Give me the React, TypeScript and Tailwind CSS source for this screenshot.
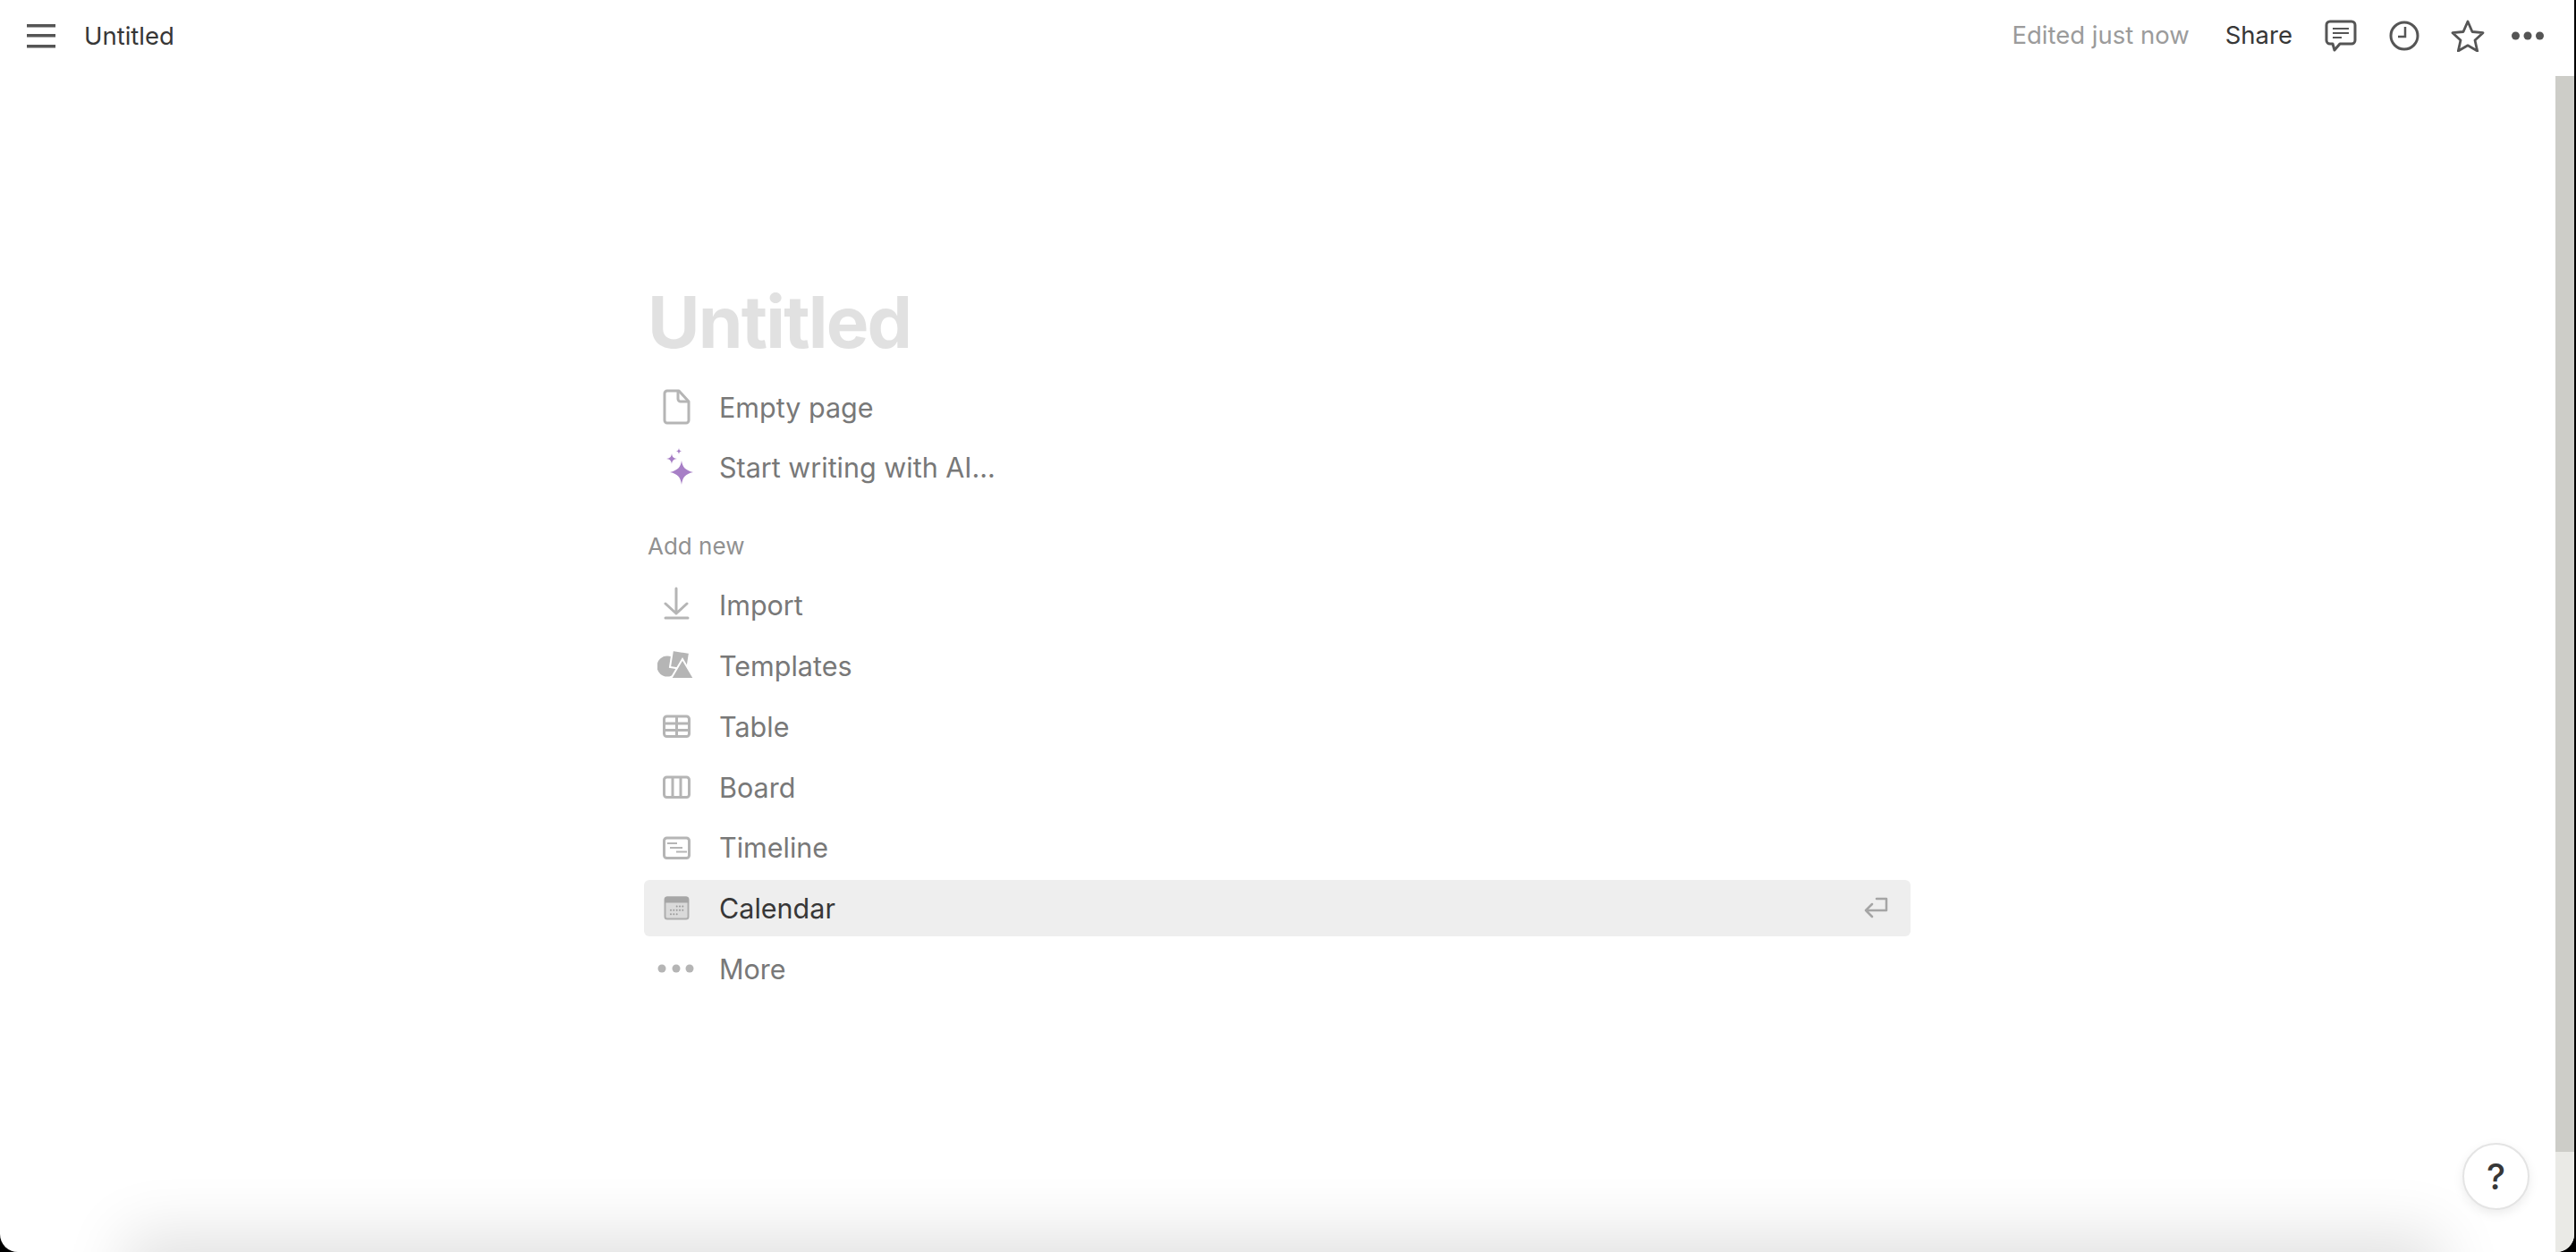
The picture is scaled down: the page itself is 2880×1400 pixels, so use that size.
const Doc = () => (
  <svg width="40" height="44" viewBox="0 0 40 44" fill="none" stroke="#b5b5b5" strokeWidth="3" strokeLinejoin="round">
    <path d="M10 4h13l11 12v21a3 3 0 0 1-3 3H10a3 3 0 0 1-3-3V7a3 3 0 0 1 3-3z" />
    <path d="M22 4v9a3 3 0 0 0 3 3h9" />
  </svg>
);

const Sparkle = () => (
  <svg width="40" height="44" viewBox="0 0 40 44" fill="#a77fc6">
    <path d="M26 14c1 7 4 11 13 13-9 2-12 6-13 14-1-8-4-12-13-14 9-2 12-6 13-13z" />
    <path d="M15 6c.5 4 2 5.500 6 6-4 .5-5.500 2-6 6-.5-4-2-5.500-6-6 4-.5 5.500-2 6-6z" />
    <path d="M23 0c.3 2.500 1 3.200 3.500 3.500C24 3.800 23.300 4.500 23 7c-.3-2.500-1-3.200-3.500-3.500C22 3.200 22.700 2.500 23 0z" />
  </svg>
);

const Import = () => (
  <svg width="40" height="40" viewBox="0 0 40 40" fill="none" stroke="#b5b5b5" strokeWidth="3" strokeLinecap="round" strokeLinejoin="round">
    <path d="M20 2v28M8 19l12 11 12-11M8 35h25" />
  </svg>
);

const Templates = () => (
  <svg width="42" height="40" viewBox="0 0 42 40" fill="#b5b5b5" stroke="#fff" strokeWidth="2">
    <circle cx="11" cy="21" r="11.500" stroke="none" />
    <path d="M17 3l19 3-3 19-19-3z" />
    <path d="M28 13l13 22H15z" />
  </svg>
);

const Table = () => (
  <svg width="40" height="40" viewBox="0 0 40 40" fill="none" stroke="#b5b5b5" strokeWidth="3">
    <rect x="6.500" y="9" width="28" height="22.500" rx="3" />
    <path d="M6 17h29M6 24.500h29M20.500 9v22" />
  </svg>
);

const Board = () => (
  <svg width="40" height="40" viewBox="0 0 40 40" fill="none" stroke="#b5b5b5" strokeWidth="3">
    <rect x="6.500" y="9" width="28" height="22.500" rx="3" />
    <path d="M16 9v22M25 9v22" />
  </svg>
);

const Timeline = () => (
  <svg width="40" height="40" viewBox="0 0 40 40" fill="none" stroke="#b5b5b5" strokeWidth="3">
    <rect x="6.500" y="9" width="28" height="22.500" rx="3" />
    <path d="M10 15h11M13 20h14M20 24.500h12" strokeWidth="2" />
  </svg>
);

const calendarDots = [
  [20.700, 18.500], [24, 18.500], [27.300, 18.500],
  [14, 22.800], [17.300, 22.800], [20.700, 22.800], [24, 22.800], [27.300, 22.800],
  [14, 27.200], [17.300, 27.200], [20.700, 27.200],
];

const CalendarIcon = () => (
  <svg width="40" height="40" viewBox="0 0 40 40">
    <rect x="7.500" y="8.500" width="26" height="24" rx="2.500" fill="#dadada" stroke="#adadad" strokeWidth="2" />
    <path d="M7 10.500a3 3 0 0 1 3-3h21a3 3 0 0 1 3 3v4H7z" fill="#a6a6a6" />
    <g fill="#9c9c9c">
      {calendarDots.map(([x, y]) => (
        <circle key={`${x}-${y}`} cx={x} cy={y} r="1" />
      ))}
    </g>
  </svg>
);

const More = () => (
  <svg width="44" height="40" viewBox="0 0 44 40" fill="#b5b5b5">
    <circle cx="6" cy="20" r="4.500" />
    <circle cx="22" cy="20" r="4.500" />
    <circle cx="37" cy="20" r="4.500" />
  </svg>
);

const Row = ({ icon, label, active }: { icon: React.ReactNode; label: string; active?: boolean }) => (
  <div className={`flex h-[63.800px] items-center rounded-[6px] ${active ? 'bg-[#eeeeee]' : ''}`}>
    <div className="mr-[12px] flex w-[72px] shrink-0 items-center justify-center">{icon}</div>
    <span className={`pt-[2px] text-[30.500px] leading-none ${active ? 'text-[#373737]' : 'text-[#787878]'}`}>{label}</span>
    {active && (
      <svg className="ml-auto mr-[24px]" width="30" height="26" viewBox="0 0 30 26" fill="none" stroke="#a5a5a5" strokeWidth="2.500" strokeLinecap="round" strokeLinejoin="round">
        <path d="M16 3h11v13H4M11 9l-7 7 7 7" />
      </svg>
    )}
  </div>
);

export default function App() {
  return (
    <div className="h-[1400px] w-[2880px] overflow-hidden bg-black" style={{ fontFamily: 'Inter, "Noto Sans", sans-serif' }}>
      <div className="relative flex h-full w-[2878px] flex-col overflow-hidden rounded-b-[20px] bg-white">
        <header className="flex h-[85px] shrink-0 items-center pb-[5px] text-[27.500px] text-[#373737]">
          <svg className="ml-[30px]" width="32" height="28" viewBox="0 0 32 28" fill="#555555">
            <rect x="0" y="1" width="32" height="3.500" />
            <rect x="0" y="12" width="32" height="3.500" />
            <rect x="0" y="24" width="32" height="3.500" />
          </svg>
          <span className="mt-[2px] ml-[32px]">Untitled</span>
          <span className="ml-auto text-[#9b9b9b]">Edited just now</span>
          <span className="ml-[40px]">Share</span>
          <svg className="ml-[36px]" width="36" height="36" viewBox="0 0 36 36" fill="none" stroke="#555555" strokeWidth="3" strokeLinejoin="round">
            <path d="M6 2h24a4 4 0 0 1 4 4v17a4 4 0 0 1-4 4H17l-6 7-2-7H6a4 4 0 0 1-4-4V6a4 4 0 0 1 4-4z" />
            <path d="M9 10h18M9 15h18M9 20h10" strokeWidth="2" />
          </svg>
          <svg className="ml-[36px]" width="34" height="34" viewBox="0 0 34 34" fill="none" stroke="#555555" strokeWidth="3">
            <circle cx="17" cy="17" r="15" />
            <path d="M18 7v11h-8" strokeWidth="2.500" />
          </svg>
          <svg className="ml-[35px]" width="38" height="36" viewBox="0 0 38 36" fill="none" stroke="#555555" strokeWidth="2.800" strokeLinejoin="round">
            <path d="M19 2l5 11.500 12 1.200-9 8.300 2.700 12L19 28.800 8.300 35 11 23l-9-8.300 12-1.200z" />
          </svg>
          <svg className="ml-[30px] mr-[34px]" width="36" height="10" viewBox="0 0 36 10" fill="#555555">
            <circle cx="4.500" cy="5" r="4.500" />
            <circle cx="18" cy="5" r="4.500" />
            <circle cx="31.500" cy="5" r="4.500" />
          </svg>
        </header>
        <div className="flex min-h-0 flex-1">
          <main className="flex-1">
            <div className="ml-[720px] w-[1416px] pt-[227px]">
              <h1 className="pl-[4px] text-[80px] leading-[96px] font-bold tracking-[-1.800px] text-[#e1e1e1]">Untitled</h1>
              <div className="mt-[15px] flex flex-col gap-[4px]">
                <Row icon={<Doc />} label="Empty page" />
                <Row icon={<Sparkle />} label="Start writing with AI..." />
              </div>
              <div className="mt-[36px] mb-[14px] pl-[4px] text-[26px] leading-[40px] text-[#919191]">Add new</div>
              <div className="flex flex-col gap-[4px]">
                <Row icon={<Import />} label="Import" />
                <Row icon={<Templates />} label="Templates" />
                <Row icon={<Table />} label="Table" />
                <Row icon={<Board />} label="Board" />
                <Row icon={<Timeline />} label="Timeline" />
                <Row icon={<CalendarIcon />} label="Calendar" active />
                <Row icon={<More />} label="More" />
              </div>
            </div>
          </main>
          <div className="flex w-[21px] flex-col bg-[#eaeae6]">
            <div className="h-[1203px] bg-[#cdcdc8]" />
          </div>
        </div>
        <div className="absolute top-[1410px] left-[170px] h-[40px] w-[2530px] shadow-[0_0_70px_30px_rgba(0,0,0,0.12)]" />
        <div className="absolute top-[1278px] left-[2753px] flex h-[75px] w-[75px] items-center justify-center rounded-full border-2 border-[#e4e4e4] bg-white text-[40px] font-medium text-[#373737] shadow-[0_4px_12px_rgba(15,15,15,0.08)]">
          ?
        </div>
      </div>
    </div>
  );
}
